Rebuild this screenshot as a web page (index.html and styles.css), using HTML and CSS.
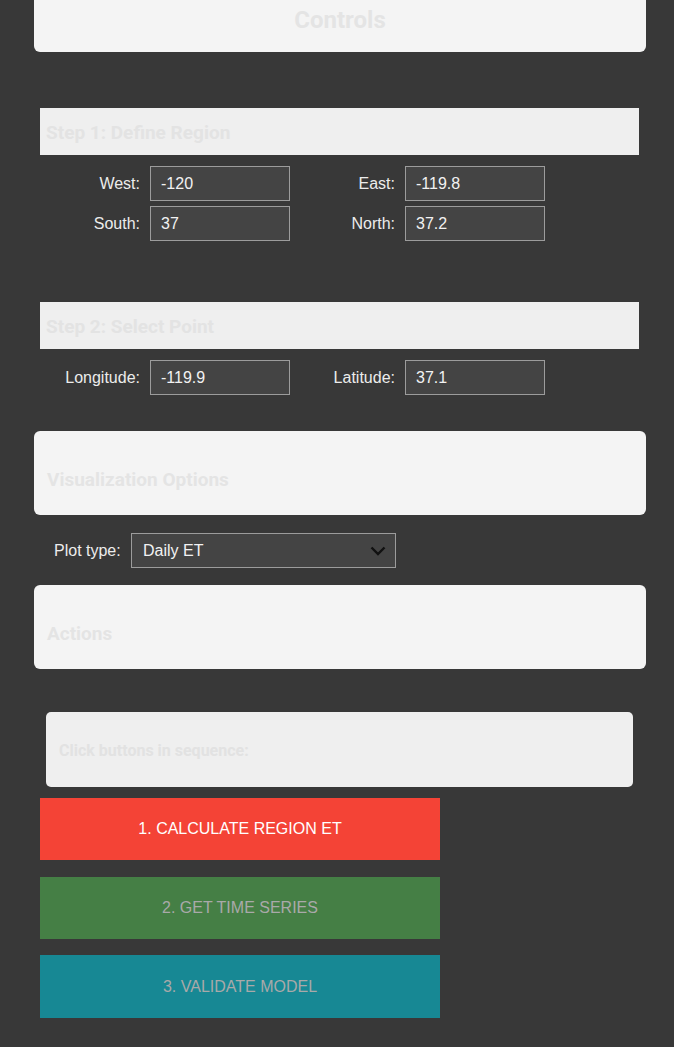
FILE: index.html
```html
<!DOCTYPE html>
<html>
<head>
<meta charset="utf-8">
<link rel="stylesheet" href="styles.css">
</head>
<body>
<div class="page">
  <div class="card card-title"><h2>Controls</h2></div>

  <div class="section section-1">
    <div class="step-head">Step 1: Define Region</div>
    <div class="grid">
      <label class="lbl">West:</label><input class="inp" value="-120">
      <label class="lbl">East:</label><input class="inp" value="-119.8">
      <label class="lbl">South:</label><input class="inp" value="37">
      <label class="lbl">North:</label><input class="inp" value="37.2">
    </div>
  </div>

  <div class="section section-2">
    <div class="step-head">Step 2: Select Point</div>
    <div class="grid">
      <label class="lbl">Longitude:</label><input class="inp" value="-119.9">
      <label class="lbl">Latitude:</label><input class="inp" value="37.1">
    </div>
  </div>

  <div class="card card-sub"><h3>Visualization Options</h3></div>
  <div class="plot-row">
    <label class="lbl lbl-plot">Plot type:</label>
    <div class="sel-wrap">
      <select class="sel"><option>Daily ET</option></select>
      <svg class="chev" width="16" height="10" viewBox="0 0 16 10"><path d="M1.5 1.5 L8 8 L14.5 1.5" fill="none" stroke="#111" stroke-width="2.4"/></svg>
    </div>
  </div>

  <div class="card card-sub card-actions"><h3>Actions</h3></div>

  <div class="hint"><h4>Click buttons in sequence:</h4></div>

  <div class="buttons">
    <button class="btn btn-red">1. CALCULATE REGION ET</button>
    <button class="btn btn-green">2. GET TIME SERIES</button>
    <button class="btn btn-teal">3. VALIDATE MODEL</button>
  </div>
</div>
</body>
</html>
```

FILE: styles.css
```css
html, body {
  margin: 0;
  padding: 0;
  background: #383838;
  font-family: "Liberation Sans", Arial, sans-serif;
}
.page {
  width: 612px;
  margin-left: 34px;
  display: flex;
  flex-direction: column;
}
.card {
  background: #f4f4f4;
  border-radius: 6px;
}
.card-title {
  margin-top: -12px;
  height: 64px;
  display: flex;
  align-items: center;
  justify-content: center;
  box-sizing: border-box;
}
.card-title h2 {
  margin: 0;
  font-family: Roboto, sans-serif;
  font-size: 24px;
  line-height: 28px;
  font-weight: 700;
  color: #e4e4e4;
}
.section {
  padding: 0 7px 0 6px;
}
.section-1 { margin-top: 56px; }
.section-2 { margin-top: 61px; }
.step-head {
  height: 47px;
  background: #efefef;
  color: #e3e3e3;
  font-family: Roboto, sans-serif;
  font-size: 19px;
  font-weight: 700;
  display: flex;
  align-items: center;
  padding-left: 6px;
  padding-top: 2px;
  box-sizing: border-box;
}
.grid {
  display: grid;
  grid-template-columns: 100px 140px 95px 140px;
  column-gap: 10px;
  row-gap: 5px;
  align-items: center;
  margin-top: 11px;
}
.lbl {
  color: #ececec;
  font-size: 16px;
  text-align: right;
}
.inp {
  height: 35px;
  box-sizing: border-box;
  background: #444444;
  border: 1px solid #9c9c9c;
  color: #f2f2f2;
  font-family: "Liberation Sans", Arial, sans-serif;
  font-size: 16px;
  padding: 0 10px;
  margin: 0;
  width: 140px;
  outline: none;
}
.card-sub {
  margin-top: 36px;
  height: 84px;
  box-sizing: border-box;
  padding: 38px 13px 0;
}
.card-sub h3 {
  margin: 0;
  font-family: Roboto, sans-serif;
  font-size: 19px;
  line-height: 22px;
  font-weight: 700;
  color: #e4e4e4;
}
.card-actions { margin-top: 17px; }
.plot-row {
  display: flex;
  align-items: center;
  gap: 9px;
  margin-top: 18px;
  padding-left: 20px;
}
.lbl-plot {
  text-align: left;
  width: 68px;
  white-space: nowrap;
}
.sel-wrap {
  position: relative;
  width: 265px;
  height: 35px;
}
.sel {
  appearance: none;
  -webkit-appearance: none;
  width: 265px;
  height: 35px;
  background: #444444;
  border: 1px solid #9c9c9c;
  border-radius: 0;
  color: #f2f2f2;
  font-family: "Liberation Sans", Arial, sans-serif;
  font-size: 16px;
  padding: 0 11px;
  margin: 0;
  outline: none;
}
.chev {
  position: absolute;
  right: 10px;
  top: 13px;
  pointer-events: none;
}
.hint {
  margin: 43px 13px 0 12px;
  height: 75px;
  background: #efefef;
  border-radius: 5px;
  display: flex;
  align-items: center;
  padding-left: 13px;
  padding-top: 2px;
  box-sizing: border-box;
}
.hint h4 {
  margin: 0;
  font-family: Roboto, sans-serif;
  font-size: 16px;
  font-weight: 700;
  color: #e2e2e2;
}
.buttons {
  display: flex;
  flex-direction: column;
  margin-top: 11px;
  padding-left: 6px;
}
.btn {
  width: 400px;
  height: 62px;
  border: none;
  border-radius: 0;
  font-family: "Liberation Sans", Arial, sans-serif;
  font-size: 16px;
  margin: 0;
}
.btn-red { background: #f44336; color: #ffffff; }
.btn-green { background: #457f45; color: #a9a9a9; margin-top: 17px; }
.btn-teal { background: #178894; color: #a9a9a9; height: 63px; margin-top: 16px; }
```
